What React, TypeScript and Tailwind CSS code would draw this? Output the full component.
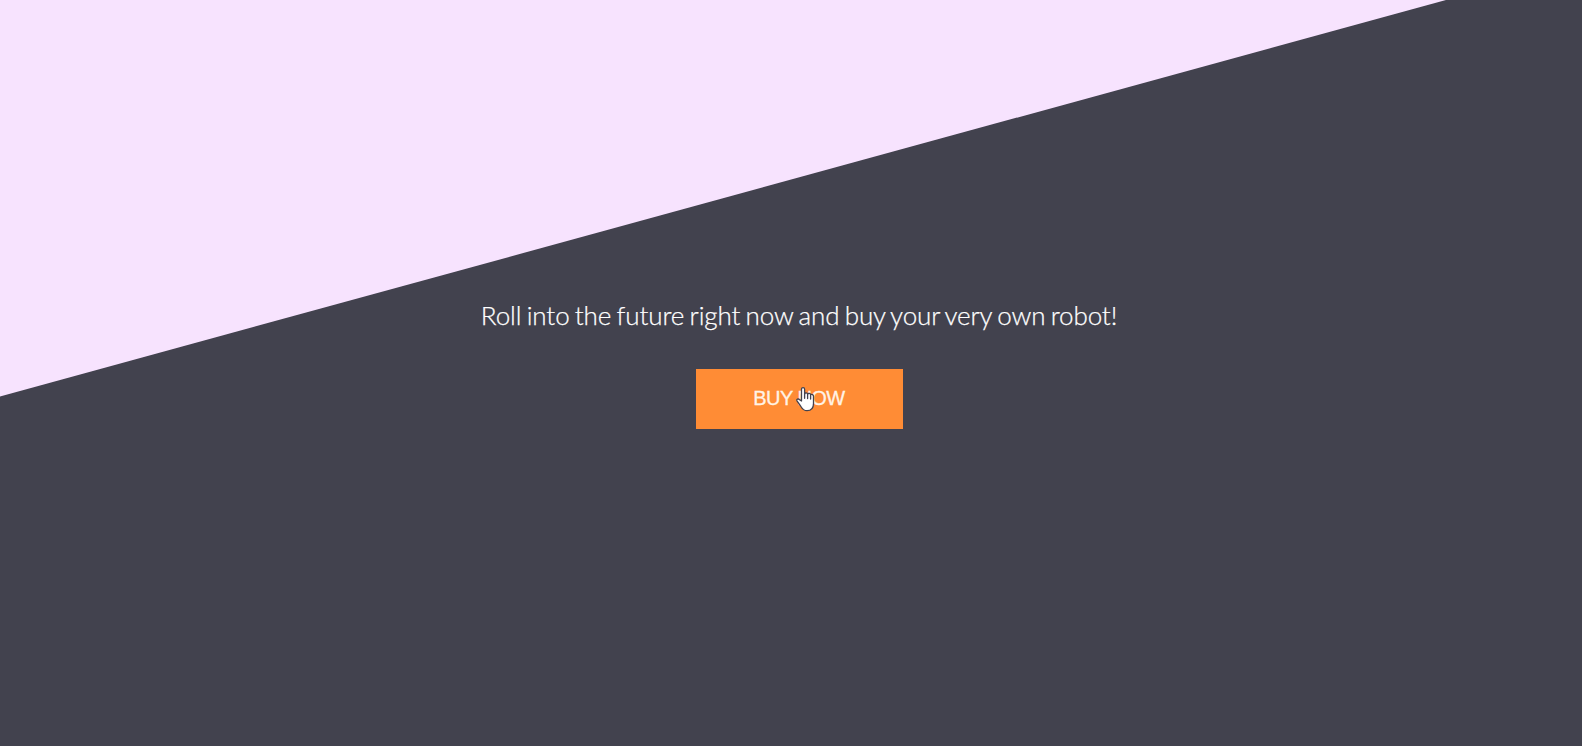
export default function App() {
  return (
    <main className="relative flex h-[746px] w-full flex-col items-center overflow-hidden bg-[#42424e]">
      <div className="absolute inset-0 bg-[#f7e3fe] [clip-path:polygon(0_0,1446px_0,0_396.5px)]" />
      <p className="relative mt-[299px] ml-4 whitespace-nowrap font-['Lato',sans-serif] text-[26px] leading-[33px] font-light tracking-[-0.1px] text-white [word-spacing:-1.7px] [-webkit-text-stroke:0.25px_white]">
        Roll into the future right now and buy your very own robot!
      </p>
      <button className="relative mt-[37px] ml-[17px] flex h-[60px] w-[207.5px] items-center justify-center bg-[#ff8c35] font-['Liberation_Sans',Arial,sans-serif] text-[20px] tracking-[-0.55px] text-[#fff3e6] [-webkit-text-stroke:0.3px_#fff3e6]">
        <span className="-mt-[2px] mr-px">BUY NOW</span>
        <svg className="absolute top-[18px] left-[100px]" width="19" height="25" viewBox="0 0 19 25" fill="white" stroke="#43424e" strokeWidth="1.3" strokeLinejoin="round" strokeLinecap="round">
          <path d="M5.5 14V2.2C5.5.2 8.6.2 8.6 2.2V7C9.3 5.5 11.3 5.7 11.6 7.1C12.6 5.9 14.3 6.3 14.6 7.7C16 7 17.5 7.8 17.5 9.3V16.5C17.5 21 15.2 23.7 11 23.7C7.8 23.7 6.2 21.8 4.7 19.2L1 13.8C.1 12.2 2.2 11.4 3.5 12.6Z" />
          <path d="M8.6 7V11.3M11.6 7.1V11.6M14.6 7.7V12" fill="none" />
        </svg>
      </button>
    </main>
  );
}
